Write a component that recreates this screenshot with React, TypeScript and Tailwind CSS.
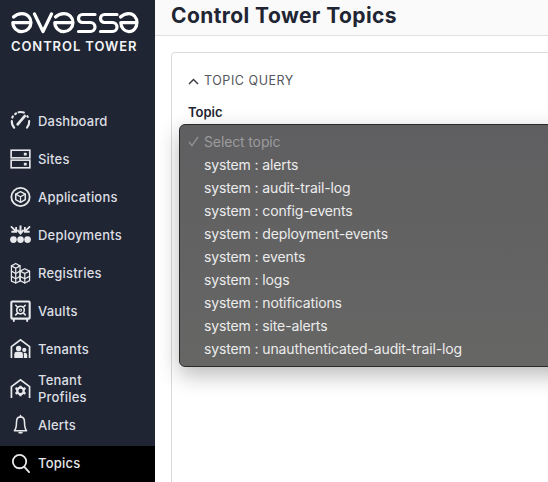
import React from "react";

const ic = {
  width: 22,
  height: 22,
  viewBox: "0 0 22 22",
  fill: "none",
  stroke: "currentColor",
  strokeWidth: 1.5,
  strokeLinecap: "round" as const,
  strokeLinejoin: "round" as const,
};

const Gauge = () => (
  <svg {...ic} strokeWidth={2.2}>
    <path d="M4.4 18 A9.4 9.4 0 0 1 1.9 11" />
    <path d="M2.4 7.4 L3 6.2" />
    <path d="M5.4 3.8 L6.4 3" />
    <path d="M9 1.9 A9.4 9.4 0 0 1 14.5 2.2" />
    <path d="M20.1 11 A9.4 9.4 0 0 1 17.8 18" />
    <path d="M8 14.5 L15.4 5.8" strokeWidth={2.8} />
    <path d="M18 6 L18.6 6.8" />
  </svg>
);
const Sites = () => (
  <svg {...ic} strokeWidth={1.7} strokeLinecap="butt" strokeLinejoin="miter">
    <rect x="1.2" y="1.8" width="19.6" height="8" />
    <rect x="1.2" y="12.2" width="19.6" height="8" />
    <rect x="14.5" y="4.5" width="3" height="2.8" fill="currentColor" stroke="none" />
    <rect x="14.5" y="15" width="3" height="2.8" fill="currentColor" stroke="none" />
  </svg>
);
const Apps = () => (
  <svg {...ic}>
    <circle cx="11" cy="11" r="9.6" strokeWidth={1.9} />
    <path d="M11 5.4 L16 8 V13.8 L11 16.6 L6 13.8 V8 Z" strokeWidth={1.6} />
    <path d="M6 8 L11 10.8 L16 8 M11 10.8 V16.6" strokeWidth={1.3} />
  </svg>
);
const Deploy = () => (
  <svg {...ic} strokeLinecap="butt" strokeLinejoin="miter">
    <path d="M11 1 V9 M7.6 5.6 L11 9.4 L14.4 5.6" strokeWidth={2.1} />
    <path d="M1 2 L5.5 6.5 M1.4 7.6 H6.4 V2.6" strokeWidth={1.9} />
    <path d="M21 2 L16.5 6.5 M15.6 2.6 V7.6 H20.6" strokeWidth={1.9} />
    <circle cx="3.6" cy="15.8" r="3.5" fill="currentColor" stroke="none" />
    <circle cx="11" cy="15.8" r="3.5" fill="currentColor" stroke="none" />
    <circle cx="18.4" cy="15.8" r="3.5" fill="currentColor" stroke="none" />
  </svg>
);
const Registries = () => (
  <svg {...ic} strokeWidth={1.3}>
    <path d="M6 1 L10.5 3.5 V19.5 L6 21.5 L1.5 19.5 V3.5 Z" />
    <path d="M1.5 3.5 L6 6 L10.5 3.5 M6 6 V21.5" />
    <path d="M1.5 9 L6 11.5 L10.5 9 M1.5 14.5 L6 17 L10.5 14.5" />
    <path d="M15.5 6.5 L20.5 9 V19 L15.5 21.5 L10.5 19 V9 Z" />
    <path d="M10.5 9 L15.5 11.5 L20.5 9 M15.5 11.5 V21.5" />
    <path d="M10.5 14.5 L15.5 17 L20.5 14.5" />
  </svg>
);
const Vault = () => (
  <svg {...ic}>
    <rect x="1.4" y="1" width="19.2" height="18" rx="1" strokeWidth={2.2} />
    <path d="M4 19.5 V21.5 M18 19.5 V21.5" strokeWidth={2} />
    <circle cx="11" cy="10" r="4" strokeWidth={1.7} />
    <circle cx="11" cy="10" r="1.2" strokeWidth={1.1} />
    <path d="M6 5 L7.8 6.8 M16 5 L14.2 6.8 M6 15 L7.8 13.2 M16 15 L14.2 13.2" strokeWidth={1.7} />
  </svg>
);
const Tenants = () => (
  <svg {...ic} strokeWidth={1.8} strokeLinecap="butt" strokeLinejoin="miter">
    <path d="M1.5 20.5 V8.5 L11 1.5 L20.5 8.5 V20.5" />
    <circle cx="9" cy="10.5" r="2.8" fill="currentColor" stroke="none" />
    <circle cx="15" cy="12" r="2.2" fill="currentColor" stroke="none" />
    <path d="M4.5 20.5 V16.5 Q4.5 14 7 14 H11 Q13.5 14 13.5 16.5 V20.5 Z" fill="currentColor" stroke="none" />
    <path d="M14.5 20.5 V15 H15.5 Q18 15 18 17.5 V20.5 Z" fill="currentColor" stroke="none" />
  </svg>
);
const Profiles = () => (
  <svg {...ic} strokeWidth={1.8} strokeLinecap="butt" strokeLinejoin="miter">
    <path d="M1.5 20.5 V8.5 L11 1.5 L20.5 8.5 V20.5" />
    <circle cx="11" cy="13" r="3.4" strokeWidth={2.4} />
    <path
      d="M11 7.5 V9.5 M11 16.5 V18.5 M5.8 10 L7.8 11.2 M14.2 14.8 L16.2 16 M5.8 16 L7.8 14.8 M14.2 11.2 L16.2 10"
      strokeWidth={2.4}
    />
  </svg>
);
const Bell = () => (
  <svg {...ic} strokeWidth={1.6}>
    <path d="M11 2.5 C7.6 2.5 6.8 5.2 6.8 8 C6.8 12.5 6.2 15 4.6 17 H17.4 C15.8 15 15.2 12.5 15.2 8 C15.2 5.2 14.4 2.5 11 2.5 Z" />
    <path d="M11 1 V2.5 M9.5 19 H12.5" />
  </svg>
);
const Search = () => (
  <svg {...ic} strokeWidth={1.9}>
    <circle cx="10" cy="9.5" r="7" />
    <path d="M15 15 L20 20.5" />
  </svg>
);

const Logo = () => (
  <svg
    width="128"
    height="22"
    viewBox="0 0 128 22"
    fill="none"
    stroke="white"
    strokeWidth="3.2"
    strokeLinecap="round"
    strokeLinejoin="round"
    role="img"
    aria-label="avassa"
  >
    <path d="M2.5 5 Q6 1.6 11 1.6 A9 9 0 0 1 11 19.6 A9 9 0 0 1 1.8 10.6 H20" />
    <path d="M23.5 2 L32 19.5 L40.5 2" />
    <path d="M44.5 5 Q48 1.6 53 1.6 A9 9 0 0 1 53 19.6 A9 9 0 0 1 43.8 10.6 H62" />
    <path d="M84 2.5 H71.5 A4 4 0 0 0 71.5 10.5 H79.5 A4.5 4.5 0 0 1 79.5 19.5 H67.5" />
    <path d="M106 2.5 H93.5 A4 4 0 0 0 93.5 10.5 H101.5 A4.5 4.5 0 0 1 101.5 19.5 H89.5" />
    <path d="M109.5 5 Q113 1.6 118 1.6 A8 9 0 0 1 118 19.6 A8 9 0 0 1 109.8 10.6 H126" />
  </svg>
);

const nav: { label: React.ReactNode; icon: React.ReactNode; two?: boolean; active?: boolean }[] = [
  { label: "Dashboard", icon: <Gauge /> },
  { label: "Sites", icon: <Sites /> },
  { label: "Applications", icon: <Apps /> },
  { label: "Deployments", icon: <Deploy /> },
  { label: "Registries", icon: <Registries /> },
  { label: "Vaults", icon: <Vault /> },
  { label: "Tenants", icon: <Tenants /> },
  { label: <>Tenant<br />Profiles</>, icon: <Profiles />, two: true },
  { label: "Alerts", icon: <Bell /> },
  { label: "Topics", icon: <Search />, active: true },
];

const options = [
  "alerts",
  "audit-trail-log",
  "config-events",
  "deployment-events",
  "events",
  "logs",
  "notifications",
  "site-alerts",
  "unauthenticated-audit-trail-log",
];

export default function App() {
  return (
    <div className="flex h-[482px] w-[548px] overflow-hidden bg-white font-['Inter',sans-serif]">
      <aside className="flex w-[155px] shrink-0 flex-col bg-[#1f2532] text-[#dcdee3]">
        <div className="flex h-[102px] flex-col pl-[11px] pt-[12px]">
          <Logo />
          <div className="mt-[4px] whitespace-nowrap text-[13px] font-semibold leading-[16px] tracking-[0.9px] text-[#f2f3f5]">
            CONTROL TOWER
          </div>
        </div>
        <nav className="flex flex-col">
          {nav.map((n, i) => (
            <div
              key={i}
              className={`flex items-center gap-[7px] pl-[10px] text-[13px] font-medium leading-[17px] tracking-[0.2px] ${
                n.active ? "mt-[2px] h-[36px] bg-black pb-[2px] text-[#e6e7ea]" : "h-[38px]"
              }`}
            >
              <span className={`flex w-[21px] shrink-0 justify-center text-[#e8e9ec] ${n.two ? "pt-[3px]" : ""}`}>
                {n.icon}
              </span>
              <span className={n.two ? "pt-[3px]" : ""}>{n.label}</span>
            </div>
          ))}
        </nav>
      </aside>
      <main className="flex min-w-0 flex-1 flex-col">
        <header className="flex h-[36px] shrink-0 items-center border-b border-[#dfe0e3] bg-[#fafafa] pb-[3px] pl-[16px]">
          <h1 className="whitespace-nowrap text-[21px] font-bold leading-[24px] tracking-[0.42px] text-[#1f2532]">
            Control Tower Topics
          </h1>
        </header>
        <div className="pl-[16px] pt-[16px]">
          <div className="relative h-[500px] w-[500px] rounded-[4px] border border-[#d8d8de] bg-white">
            <div className="flex items-center gap-[5px] pl-[16px] pt-[20px] text-[#53565c]">
              <svg width="11" height="7" viewBox="0 0 11 7" fill="none" stroke="#33363c" strokeWidth="1.4">
                <path d="M1 6 L5.5 1.5 L10 6" />
              </svg>
              <span className="text-[12.5px] leading-[16px] tracking-[0.55px]">TOPIC QUERY</span>
            </div>
            <div className="pl-[16px] pt-[15px] text-[13px] font-semibold leading-[16px] text-[#1f2532]">
              Topic
            </div>
            <div className="absolute left-[7px] top-[71px] w-[450px] rounded-[6px] border border-[#2a2a2a] bg-[linear-gradient(180deg,#5f5f61,#666665)] pb-[6px] pt-[5px] shadow-[0_8px_22px_rgba(0,0,0,0.28)]">
              <div className="flex h-[23px] items-center text-[14px] tracking-[-0.13px] text-[#9b9b9d]">
                <span className="flex w-[24px] justify-end pr-[5px]">
                  <svg width="11" height="11" viewBox="0 0 11 11" fill="none" stroke="#8e8e90" strokeWidth="1.4">
                    <path d="M1 6 L4 9.5 L10 1" />
                  </svg>
                </span>
                Select topic
              </div>
              {options.map((o) => (
                <div
                  key={o}
                  className="flex h-[23px] items-center whitespace-nowrap pl-[24px] text-[14px] tracking-[-0.13px] text-[#ececec]"
                >
                  system : {o}
                </div>
              ))}
            </div>
          </div>
        </div>
      </main>
    </div>
  );
}
